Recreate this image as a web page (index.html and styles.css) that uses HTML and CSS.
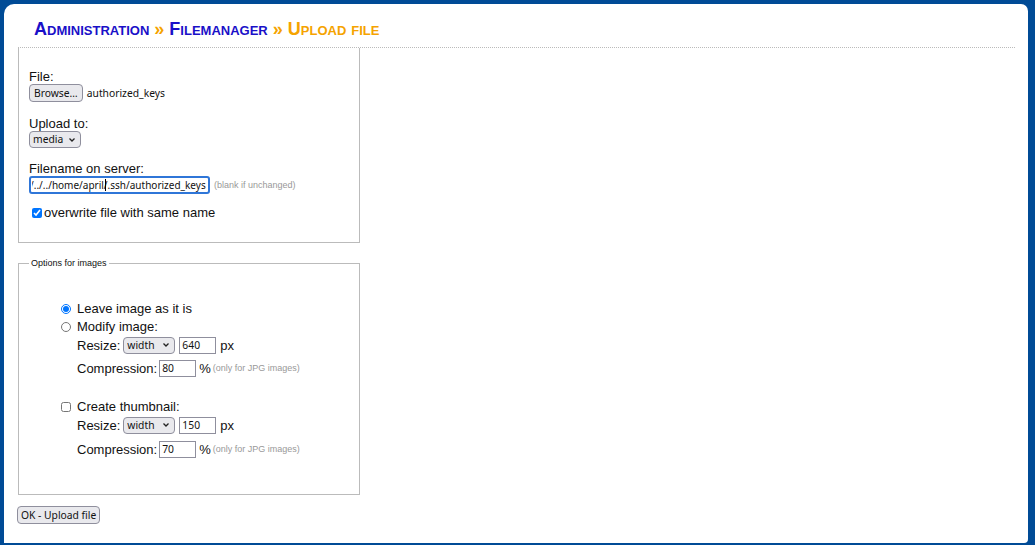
FILE: index.html
```html
<!DOCTYPE html>
<html>
<head>
<meta charset="utf-8">
<title>Upload file</title>
<link rel="stylesheet" href="styles.css">
</head>
<body>
<div class="page">
  <h1 class="crumbs"><span class="link">Administration</span> <span class="sep">»</span> <span class="link">Filemanager</span> <span class="sep">»</span> <span class="current">Upload file</span></h1>
  <form class="upload">
    <div class="box">
      <div class="field">
        <label class="lbl">File:</label>
        <div class="filerow"><button type="button" class="btn">Browse…</button><span class="fname">authorized_keys</span></div>
      </div>
      <div class="field">
        <label class="lbl">Upload to:</label>
        <select class="sel sel-dir"><option>media</option></select>
      </div>
      <div class="field field-name">
        <label class="lbl">Filename on server:</label>
        <div class="filerow"><span class="txtwrap"><input class="txt txt-name" type="text" value="/../../home/april/.ssh/authorized_keys"></span><span class="hint">(blank if unchanged)</span></div>
      </div>
      <label class="check overwrite"><input type="checkbox" checked>overwrite file with same name</label>
    </div>

    <fieldset class="opts">
      <legend>Options for images</legend>
      <div class="optgroup">
        <label class="check"><input type="radio" name="mode" checked>Leave image as it is</label>
        <label class="check"><input type="radio" name="mode">Modify image:</label>
        <div class="sub">
          <div class="row">Resize: <select class="sel sel-dim"><option>width</option></select><input class="txt num" type="text" value="640"><span class="unit">px</span></div>
          <div class="row row-comp">Compression: <input class="txt num" type="text" value="80"><span class="unit">%</span><span class="hint">(only for JPG images)</span></div>
        </div>
      </div>
      <div class="optgroup thumb">
        <label class="check"><input type="checkbox">Create thumbnail:</label>
        <div class="sub">
          <div class="row">Resize: <select class="sel sel-dim"><option>width</option></select><input class="txt num" type="text" value="150"><span class="unit">px</span></div>
          <div class="row row-comp">Compression: <input class="txt num" type="text" value="70"><span class="unit">%</span><span class="hint">(only for JPG images)</span></div>
        </div>
      </div>
    </fieldset>

    <button type="button" class="btn submit">OK - Upload file</button>
  </form>
</div>
</body>
</html>
```

FILE: styles.css
```css
html, body {
  margin: 0;
  padding: 0;
  height: 100%;
}
body {
  background: #004b96;
  font-family: "Liberation Sans", Arial, sans-serif;
  font-size: 13px;
  color: #111;
  padding: 4px 7px 2px 4px;
  box-sizing: border-box;
}
.page {
  background: #fff;
  height: 539px;
  border-radius: 10px 7px 4px 0;
  padding: 0 13px 0 14px;
  box-sizing: border-box;
}
.crumbs {
  margin: 0;
  padding: 15px 0 7px 16px;
  font-size: 18px;
  font-variant: small-caps;
  font-weight: bold;
  line-height: 21px;
  border-bottom: 1px dotted #bbb;
}
.crumbs .link { color: #1a10c8; }
.crumbs .sep, .crumbs .current { color: #f5a300; }

.upload {
  width: 342px;
}
.box {
  border: 1px solid #bbb;
  border-top: 0;
  padding: 21px 10px 20px 10px;
}
.field { margin-bottom: 14px; }
.field-name { margin-bottom: 10px; }
.field:nth-child(2) { margin-bottom: 13px; }
.lbl { display: block; line-height: 15px; }
.filerow { display: flex; align-items: center; gap: 4px; }
.fname { font-size: 10.3px; font-family: "Noto Sans", sans-serif; }

.btn {
  font-family: "Noto Sans", sans-serif;
  font-size: 10.3px;
  color: #111;
  background: #e9e9ed;
  border: 1px solid #8f8f9d;
  border-radius: 4px;
  padding: 0 4px;
  height: 18px;
  line-height: 16px;
}
.sel {
  -webkit-appearance: none;
  appearance: none;
  font-family: "Noto Sans", sans-serif;
  font-size: 10.3px;
  height: 17px;
  line-height: 15px;
  color: #111;
  background-color: #e9e9ed;
  background-image: url("data:image/svg+xml;utf8,<svg xmlns='http://www.w3.org/2000/svg' width='8' height='6' viewBox='0 0 8 6'><path d='M1.5 1.5 L4 4 L6.5 1.5' fill='none' stroke='%23222' stroke-width='1.3'/></svg>");
  background-repeat: no-repeat;
  background-position: right 4px center;
  border: 1px solid #8f8f9d;
  border-radius: 4px;
  padding: 0 12px 0 3px;
}
.sel-dir { width: 52px; }
.sel-dim { width: 52px; }
.txt {
  font-family: "Noto Sans", sans-serif;
  font-size: 10.3px;
  color: #111;
  height: 17px;
  box-sizing: border-box;
  border: 1px solid #8f8f9d;
  border-radius: 0;
  padding: 0 2px;
}
.txt-name {
  width: 181px;
  height: 18px;
  font-size: 10px;
  border: 2px solid #2f76d8;
  border-radius: 3px;
  text-indent: -2px;
  padding: 0 1px;
  outline: none;
}
.txtwrap { position: relative; display: inline-block; }
.txtwrap::after {
  content: "";
  position: absolute;
  left: 76px;
  top: 3px;
  width: 1px;
  height: 12px;
  background: #000;
}
.hint {
  font-size: 9px;
  color: #999;
}
.check {
  display: flex;
  align-items: center;
  line-height: 18px;
}
.check input { margin: 0 5px 0 0; width: 10px; height: 10px; }
.overwrite { margin-left: 3px; }
.overwrite input { margin-right: 2px; }

.opts {
  margin: 15px 0 0 0;
  border: 1px solid #bbb;
  padding: 32px 10px 35px 10px;
}
.opts legend {
  font-size: 9px;
  padding: 0 2px;
  margin-left: 0;
}
.optgroup { padding-left: 32px; }
.optgroup .check input { margin-right: 6px; }
.sub { padding-left: 16px; }
.row {
  display: flex;
  align-items: center;
  height: 20px;
}
.sub .row:first-child { margin-top: -1px; }
.row select { margin-left: 3px; }
.row .num { margin-left: 4px; }
.row-comp .num { margin-left: 2px; }
.row-comp { margin-top: 3px; }
.thumb .row-comp { margin-top: 4px; }
.unit { margin-left: 4px; }
.row-comp .unit { margin-left: 3px; }
.row .hint { margin-left: 2px; }
.num { width: 37px; }
.thumb { margin-top: 20px; }
.submit {
  margin: 11px 0 0 -1px;
  padding: 0 3px;
}
```
